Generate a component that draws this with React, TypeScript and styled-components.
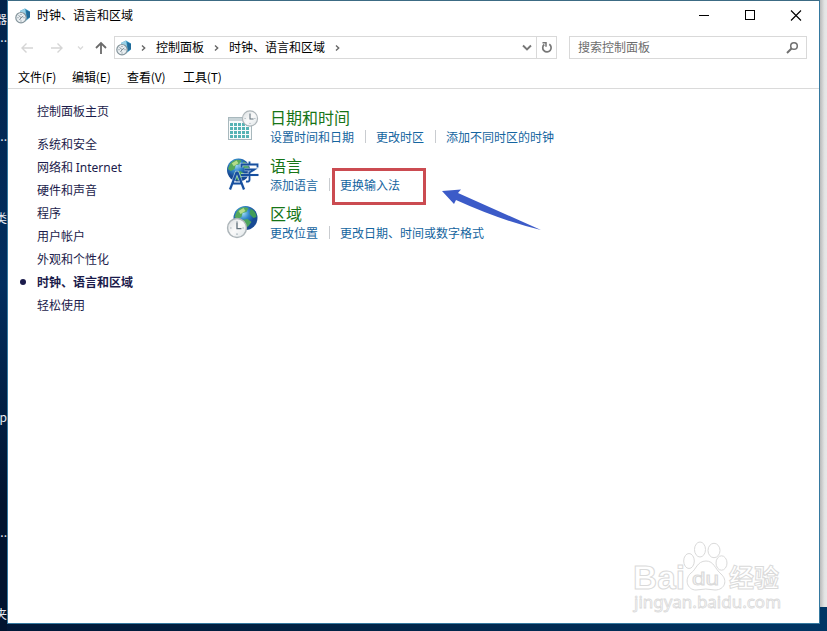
import React from 'react';
import styled, { createGlobalStyle } from 'styled-components';

const GlobalStyle = createGlobalStyle`
  * { box-sizing: border-box; }
  body {
    margin: 0;
    overflow: hidden;
    font-family: "Noto Sans CJK SC", "Noto Sans", sans-serif;
    font-size: 12px;
  }
`;

const Desktop = styled.div`
  display: grid;
  grid-template-columns: 7px 813px 7px;
  width: 827px;
  height: 631px;
  background: linear-gradient(90deg, #011838 0%, #012142 35%, #013564 100%);
  overflow: hidden;
`;

const DesktopEdge = styled.div`
  position: relative;
  overflow: hidden;
  background: linear-gradient(#02234b, #012e5f 45%, #01142f 80%);
`;

const DesktopLabel = styled.span<{ $top: number }>`
  position: absolute;
  right: 0;
  top: ${(p) => p.$top}px;
  line-height: 16px;
  white-space: nowrap;
  color: #e6ebf2;
`;

const Behind = styled.div`
  height: 607px;
  background: linear-gradient(90deg, #b9b9b9, #e2e2e2 60%, #e8e8e8);
`;

const Window = styled.div`
  position: relative;
  height: 624px;
  background: #fff;
  border: 1px solid #3579a0;
  border-top-color: #3c6b84;
  display: flex;
  flex-direction: column;
`;

const TitleBar = styled.header`
  display: flex;
  align-items: center;
  height: 29px;
  padding-left: 7px;
  color: #000;
`;

const Title = styled.span`
  flex: 1;
  margin-left: 6px;
  padding-bottom: 2px;
`;

const WindowButton = styled.button`
  width: 46px;
  height: 29px;
  padding: 0;
  border: 0;
  background: none;
  display: flex;
  align-items: center;
  justify-content: center;
`;

const NavBar = styled.nav`
  display: flex;
  align-items: center;
  height: 23px;
  margin-top: 6px;
  padding: 0 12px 0 11px;
`;

const NavIcons = styled.div`
  width: 95px;
  height: 23px;
  svg { display: block; }
`;

const AddressBar = styled.div`
  display: flex;
  align-items: center;
  width: 443px;
  height: 23px;
  border: 1px solid #d9d9d9;
  padding-left: 1px;
`;

const Crumb = styled.span`
  line-height: 20px;
  padding-bottom: 2px;
`;

const Chevron = styled.svg<{ $left: number; $right: number }>`
  margin-left: ${(p) => p.$left}px;
  margin-right: ${(p) => p.$right}px;
`;

const DropArrow = styled.svg`
  margin-left: auto;
  margin-right: 4px;
`;

const Refresh = styled.div`
  width: 20px;
  height: 21px;
  border-left: 1px solid #d9d9d9;
  display: flex;
  align-items: center;
  justify-content: center;
`;

const SearchBox = styled.div`
  display: flex;
  align-items: center;
  justify-content: space-between;
  width: 238px;
  height: 23px;
  margin-left: 12px;
  padding: 0 7px 0 8px;
  border: 1px solid #d9d9d9;
  color: #6d6d6d;
`;

const SearchHint = styled.span`
  line-height: 18px;
  padding-bottom: 2px;
`;

const MenuBar = styled.div`
  display: flex;
  align-items: center;
  height: 30px;
  padding-left: 10px;
  padding-top: 6px;
  border-bottom: 1px solid #dadada;
  line-height: 23px;
  color: #000;
`;

const MenuItem = styled.span<{ $width: number }>`
  width: ${(p) => p.$width}px;
  letter-spacing: -0.1px;
`;

const Body = styled.main`
  display: flex;
  flex: 1;
`;

const Sidebar = styled.aside`
  width: 218px;
  padding: 10px 0 0 29px;
  color: #1b1b4b;
  line-height: 23px;
`;

const HomeLink = styled.div`
  height: 23px;
  margin-bottom: 10px;
`;

const SideLink = styled.div<{ $active?: boolean }>`
  position: relative;
  height: 23px;
  font-weight: ${(p) => (p.$active ? 700 : 400)};
  &::before {
    content: '';
    display: ${(p) => (p.$active ? 'block' : 'none')};
    position: absolute;
    left: -17px;
    top: 9px;
    width: 6px;
    height: 6px;
    border-radius: 50%;
    background: #1b1b4b;
  }
`;

const Latin = styled.span`
  font-family: "Noto Sans", sans-serif;
`;

const Categories = styled.section`
  padding-top: 19px;
`;

const Category = styled.article`
  display: flex;
  height: 48px;
`;

const CategoryIcon = styled.svg`
  width: 34px;
  height: 34px;
  margin: 1px 10px 0 0;
`;

const CategoryTitle = styled.h2`
  margin: 0;
  height: 19px;
  font-size: 16px;
  line-height: 19px;
  font-weight: 400;
  color: #177517;
`;

const Links = styled.div`
  display: flex;
  align-items: center;
  height: 19px;
`;

const TaskLink = styled.a`
  color: #1565a0;
  white-space: nowrap;
  & + & {
    display: flex;
    align-items: center;
  }
  & + &::before {
    content: '';
    height: 13px;
    margin: 0 10px 0 11px;
    border-left: 1px solid #c9ccd0;
  }
`;

const Highlight = styled.div`
  position: absolute;
  left: 324px;
  top: 167px;
  width: 94px;
  height: 37px;
  border: 3px solid #cb4b51;
`;

const Arrow = styled.svg`
  position: absolute;
  left: 432px;
  top: 185px;
`;

const Watermark = styled.svg`
  position: absolute;
  left: 622px;
  top: 535px;
`;

const ClockGlobe = () => (
  <svg width="16" height="16" viewBox="0 0 16 16">
    <path d="M5 3 10 0.5l5 3v6l-5 4z" fill="#3c9bc7" />
    <path d="M5 3 10 .5l1 6-3 2z" fill="#9bd0e5" />
    <path d="M11 2l4 2v5l-3 2z" fill="#216b99" />
    <circle cx="6" cy="9.700" r="5.200" fill="#e9eef1" stroke="#84949b" strokeWidth="1.200" />
    <path d="M6 6v1M6 12.500v1M2.500 9.700h1M8.500 9.700h1M3.700 7.300l2.300 2.400 2.300-1.600M6 9.700 4.500 12" stroke="#6d7e87" strokeWidth=".9" fill="none" />
  </svg>
);

const Gt = ({ l, r }: { l: number; r: number }) => (
  <Chevron $left={l} $right={r} width="5" height="8" viewBox="0 0 5 8">
    <path d="M1 1.500 3.700 4 1 6.500" fill="none" stroke="#666" strokeWidth="1.400" />
  </Chevron>
);

const Earth = ({ cx, cy, r }: { cx: number; cy: number; r: number }) => (
  <g transform={`translate(${cx} ${cy}) scale(${r / 12})`}>
    <circle r="12" fill="url(#sea)" />
    <path d="M-9-6C-5-12 0-11 3-10L1-6-3-5-4-1-8 1-11-1z" fill="#55a85b" />
    <path d="M-7-7-2-10 0-7-5-4z" fill="#b5dc8a" />
    <path d="M5-9c4 1 6 5 6 8L8 0 4-4z" fill="#429d58" />
    <path d="M-4 2 2 1 6 4 3 8-1 11-4 7z" fill="#4da65e" />
  </g>
);

const Clock = ({ cx, cy, r }: { cx: number; cy: number; r: number }) => (
  <g transform={`translate(${cx} ${cy}) scale(${r / 9})`}>
    <circle r="8.500" fill="url(#face)" stroke="#adb5b9" strokeWidth="1.300" />
    <path d="M0-6v1M0 5v1M-6 0h1M5 0h1" stroke="#8799a2" />
    <path d="M0-5V.5H4" fill="none" stroke="#60717b" strokeWidth="1.200" />
  </g>
);

const Defs = () => (
  <defs>
    <radialGradient id="sea" cx="40%" cy="30%">
      <stop offset="0" stopColor="#a0daf5" />
      <stop offset=".5" stopColor="#3288cc" />
      <stop offset="1" stopColor="#174a94" />
    </radialGradient>
    <linearGradient id="face" x2="1" y2="1">
      <stop offset="0" stopColor="#d8dddf" />
      <stop offset=".5" stopColor="#fafafa" />
      <stop offset="1" stopColor="#dfe5e8" />
    </linearGradient>
  </defs>
);

const DateIcon = () => (
  <CategoryIcon viewBox="0 0 34 34">
    <Defs />
    <rect x="2.500" y="8.500" width="23" height="22" fill="#f8fbfb" stroke="#a8b8bd" />
    <rect x="3" y="9" width="22" height="3" fill="#c8d4d8" />
    {[14, 18, 22, 26].map((y) =>
      [4, 8, 12, 16, 20].map((x) => (
        <rect key={`${x}-${y}`} x={x} y={y} width="3" height="3" fill="#55b3b4" />
      )),
    )}
    <Clock cx={24} cy={9.5} r={8} />
  </CategoryIcon>
);

const LanguageIcon = () => (
  <CategoryIcon viewBox="0 0 34 34">
    <Earth cx={12.5} cy={13} r={11.5} />
    <g fill="none" stroke="#e8f4fb" strokeWidth="3.600" opacity=".65">
      <path d="M15.500 10.500V7.500H31.500V10.500M23.500 4.500V7.500M18.500 12.500H28.500L23.500 15.500V23Q23.500 25 20 24.500M15 18H32.500" />
      <path d="M4 32.500 10.500 15.500H11.500L18 32.500M6 26.500H16" />
    </g>
    <g fill="none" stroke="#174f9f" strokeWidth="1.800">
      <path d="M15.500 10.500V7.500H31.500V10.500M23.500 4.500V7.500M18.500 12.500H28.500L23.500 15.500V23Q23.500 25 20 24.500M15 18H32.500" />
      <path d="M4 32.500 10.500 15.500H11.500L18 32.500M6 26.500H16" strokeWidth="2.200" />
    </g>
  </CategoryIcon>
);

const RegionIcon = () => (
  <CategoryIcon viewBox="0 0 34 34">
    <Earth cx={19.5} cy={13} r={12} />
    <Clock cx={11} cy={23} r={10} />
  </CategoryIcon>
);

const sideLinks = ['硬件和声音', '程序', '用户帐户', '外观和个性化', '时钟、语言和区域', '轻松使用'];

const categories = [
  { title: '日期和时间', Icon: DateIcon, links: ['设置时间和日期', '更改时区', '添加不同时区的时钟'] },
  { title: '语言', Icon: LanguageIcon, links: ['添加语言', '更换输入法'] },
  { title: '区域', Icon: RegionIcon, links: ['更改位置', '更改日期、时间或数字格式'] },
];

export default function App() {
  return (
    <Desktop>
      <GlobalStyle />
      <DesktopEdge>
        <DesktopLabel $top={11}>器</DesktopLabel>
        <DesktopLabel $top={29}>...</DesktopLabel>
        <DesktopLabel $top={128}>...</DesktopLabel>
        <DesktopLabel $top={210}>类</DesktopLabel>
        <DesktopLabel $top={409}>ap</DesktopLabel>
        <DesktopLabel $top={524}>...</DesktopLabel>
        <DesktopLabel $top={606}>夹</DesktopLabel>
      </DesktopEdge>
      <Window>
        <TitleBar>
          <ClockGlobe />
          <Title>时钟、语言和区域</Title>
          <WindowButton aria-label="最小化">
            <svg width="12" height="12"><path d="M1 5.500H11" stroke="#000" /></svg>
          </WindowButton>
          <WindowButton aria-label="最大化">
            <svg width="12" height="12"><rect x="1.500" y="0.500" width="9" height="9" fill="none" stroke="#000" /></svg>
          </WindowButton>
          <WindowButton aria-label="关闭">
            <svg width="12" height="12"><path d="M1 0.500 11 10.500M11 0.500 1 10.500" stroke="#000" strokeWidth="1.100" /></svg>
          </WindowButton>
        </TitleBar>
        <NavBar>
          <NavIcons>
            <svg width="95" height="23" fill="none">
              <path d="M14 12H3M7.500 7.500 3 12l4.500 4.500M32 12h11M38.500 7.500 43 12l-4.500 4.500" stroke="#d5d5d5" strokeWidth="1.400" />
              <path d="M59 10.500 61.500 13 64 10.500" stroke="#dadada" strokeWidth="1.300" />
              <path d="M82 18V7M77 12l5-5 5 5" stroke="#6b6b6b" strokeWidth="1.800" />
            </svg>
          </NavIcons>
          <AddressBar>
            <ClockGlobe />
            <Gt l={9} r={10} />
            <Crumb>控制面板</Crumb>
            <Gt l={10} r={10} />
            <Crumb>时钟、语言和区域</Crumb>
            <Gt l={10} r={0} />
            <DropArrow width="10" height="7" fill="none">
              <path d="M1 1.500 5 5.500 9 1.500" stroke="#777" strokeWidth="1.900" />
            </DropArrow>
            <Refresh>
              <svg width="12" height="13" fill="none">
                <path d="M8.300 3.300A4.200 4.200 0 1 1 3.300 3.500" stroke="#777" strokeWidth="1.700" />
                <path d="M1.500 1.800H5v4" stroke="#777" strokeWidth="1.500" />
              </svg>
            </Refresh>
          </AddressBar>
          <SearchBox>
            <SearchHint>搜索控制面板</SearchHint>
            <svg width="13" height="13" fill="none">
              <circle cx="8" cy="5" r="3.300" stroke="#707070" strokeWidth="1.500" />
              <path d="M5.500 7.500 1 12" stroke="#707070" strokeWidth="1.900" />
            </svg>
          </SearchBox>
        </NavBar>
        <MenuBar>
          <MenuItem $width={54}>文件(F)</MenuItem>
          <MenuItem $width={55}>编辑(E)</MenuItem>
          <MenuItem $width={56}>查看(V)</MenuItem>
          <MenuItem $width={55}>工具(T)</MenuItem>
        </MenuBar>
        <Body>
          <Sidebar>
            <HomeLink>控制面板主页</HomeLink>
            <SideLink>系统和安全</SideLink>
            <SideLink>网络和 <Latin>Internet</Latin></SideLink>
            {sideLinks.map((label) => (
              <SideLink key={label} $active={label === '时钟、语言和区域'}>{label}</SideLink>
            ))}
          </Sidebar>
          <Categories>
            {categories.map(({ title, Icon, links }) => (
              <Category key={title}>
                <Icon />
                <div>
                  <CategoryTitle>{title}</CategoryTitle>
                  <Links>
                    {links.map((l) => <TaskLink key={l}>{l}</TaskLink>)}
                  </Links>
                </div>
              </Category>
            ))}
          </Categories>
        </Body>
        <Highlight />
        <Arrow width="102" height="48">
          <path d="M2 5 21 3.500 18 7 101 44Q60 34 16 14L14 18Z" fill="#3c5bc8" />
        </Arrow>
        <Watermark width="162" height="82" fill="#fff" stroke="#dadada" strokeWidth="1" fontFamily='"Liberation Sans", sans-serif' fontWeight="700">
          <text x="3" y="53" fontSize="33" textLength="52" lengthAdjust="spacingAndGlyphs">Bai</text>
          <ellipse cx="59" cy="25" rx="5.300" ry="7.500" />
          <ellipse cx="70" cy="13.500" rx="5.500" ry="7.500" />
          <ellipse cx="84" cy="14.500" rx="6" ry="7.200" />
          <ellipse cx="91.500" cy="27" rx="5.500" ry="7.200" />
          <path d="M76 25C67 25 66 34 61 37C54 43 57 54 66 54Q76 52 85 54C95 54 98 44 91 38C85 33 84 25 76 25Z" />
          <text x="62" y="49" fontSize="19" fontWeight="400" textLength="27" lengthAdjust="spacingAndGlyphs">du</text>
          <text x="99" y="51" fontSize="25" textLength="50" fontFamily='"Noto Sans CJK SC", sans-serif'>经验</text>
          <text x="4" y="72" fontSize="16" strokeWidth=".8" fontWeight="400" fontFamily='"Noto Sans", sans-serif' textLength="147" lengthAdjust="spacingAndGlyphs">jingyan.baidu.com</text>
        </Watermark>
      </Window>
      <Behind />
    </Desktop>
  );
}
